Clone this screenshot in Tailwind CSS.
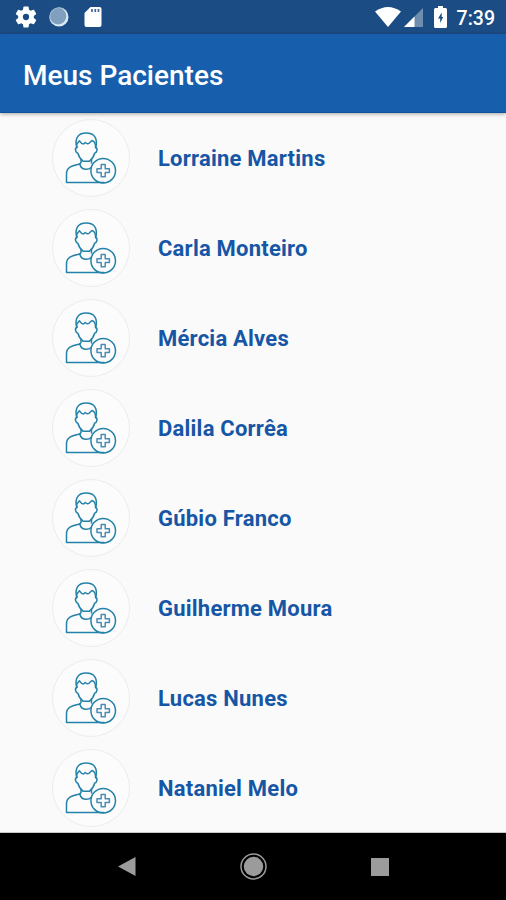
<!DOCTYPE html>
<html lang="pt-BR">
<head>
    <meta charset="UTF-8">
    <meta name="viewport" content="width=device-width, initial-scale=1.0">
    <title>Meus Pacientes</title>
    <script src="https://cdn.jsdelivr.net/npm/@tailwindcss/browser@4"></script>
</head>
<body class="h-[900px] flex flex-col overflow-hidden bg-[#fafafa] font-['Roboto',sans-serif]">

    <!-- Ícone de paciente -->
    <svg class="hidden">
        <symbol id="paciente" viewBox="0 0 78 78">
            <circle cx="39" cy="39" r="38.5" fill="#fcfcfc" stroke="#ececee" />
            <g fill="none" stroke="#2482a8" stroke-width="1.5" stroke-linecap="round" stroke-linejoin="round">
                <path d="M24.8 28.5C22.5 20 25.5 14 34.2 14S45.9 20 43.6 28.5" />
                <path d="M24.8 28.500V25L27.500 21.800Q29.500 25 31.500 25L33.200 23.500Q35 25.300 37 24.300L40 21.500Q43.600 22.500 43.600 28.500" />
                <path d="M24.8 28.5Q23 29 23.6 31.500Q24.100 34 25.900 34.200Q27.300 39.500 31.200 42.300H37.300Q41.200 39.500 42.600 34.200Q44.400 34 44.900 31.500Q45.400 29 43.600 28.500" />
                <path d="M29 40.500V43.500L27.800 45Q29 50.300 34.200 50.300Q37.500 50.300 39.200 48.500M39.500 40.500V44" />
                <path d="M27.800 45C21.500 46.500 14.500 47 14.500 55V63.500H52" />
                <circle cx="51.200" cy="51.700" r="12.300" />
                <path d="M49.200 45.600H53.200V49.800H57.400V53.600H53.200V57.800H49.200V53.600H45V49.800H49.200Z" stroke="#4a8db3" stroke-width="1.500" />
            </g>
        </symbol>
    </svg>

    <!-- Barra de status -->
    <div class="h-[34px] shrink-0 flex items-center justify-between bg-[#1b4d84] pl-[15px] pr-[11px] text-white">
        <div class="flex items-center gap-3">
            <svg class="w-[22px] h-[22px]" viewBox="1.5 1.5 21 21" fill="currentColor">
                <path d="M19.43 12.98c.04-.32.07-.64.07-.98s-.03-.66-.07-.98l2.11-1.65c.19-.15.24-.42.12-.64l-2-3.46c-.12-.22-.39-.3-.61-.22l-2.49 1c-.52-.4-1.08-.73-1.69-.98l-.38-2.65C14.46 2.18 14.25 2 14 2h-4c-.25 0-.46.18-.49.42l-.38 2.65c-.61.25-1.17.59-1.69.98l-2.49-1c-.23-.09-.49 0-.61.22l-2 3.46c-.13.22-.07.49.12.64l2.11 1.65c-.04.32-.07.65-.07.98s.03.66.07.98l-2.11 1.65c-.19.15-.24.42-.12.64l2 3.46c.12.22.39.3.61.22l2.49-1c.52.4 1.08.73 1.69.98l.38 2.65c.03.24.24.42.49.42h4c.25 0 .46-.18.49-.42l.38-2.65c.61-.25 1.17-.59 1.69-.98l2.49 1c.23.09.49 0 .61-.22l2-3.46c.12-.22.07-.49-.12-.64zM12 15a3 3 0 1 1 0-6 3 3 0 0 1 0 6z" />
            </svg>
            <svg class="w-5 h-5" viewBox="0 0 20 20">
                <circle cx="10" cy="10" r="9.5" fill="#dcebf7" />
                <circle cx="9.1" cy="9.1" r="8.3" fill="#819fbe" />
                <path d="M3.5 17A9.5 9.5 0 0 1 17 3.500" fill="none" stroke="#a7bdd2" stroke-width=".8" />
            </svg>
            <svg class="w-[18px] h-[22px] ml-[3px]" viewBox="0 0 18 22">
                <path d="M6.5 1H15.5Q17.5 1 17.5 3V19Q17.5 21 15.5 21H2.5Q.5 21 .5 19V7Z" fill="#fff" />
                <path d="M8 3V6M11.3 3V6M14.5 3V6" stroke="#3d6795" stroke-width="1.7" />
            </svg>
        </div>
        <div class="flex items-center">
            <svg class="w-[26px] h-5" viewBox="0 0 26 20">
                <path d="M0 4.5Q13-4.5 26 4.5L13 20Z" fill="#fff" />
            </svg>
            <svg class="w-[19px] h-[19px] ml-[3px]" viewBox="0 0 19 19">
                <path d="M19 0V19H0Z" fill="#6e8eaf" />
                <path d="M10.5 8.5V19H0Z" fill="#fff" />
            </svg>
            <svg class="w-[13px] h-[22px] ml-[11px]" viewBox="0 0 13 22">
                <path d="M4 0H9V2H11.5Q13 2 13 3.5V20.5Q13 22 11.5 22H1.5Q0 22 0 20.5V3.5Q0 2 1.5 2H4Z" fill="#fff" />
                <path d="M7.7 6.5L4 12.5H6.2V17L9.2 11H7.7Z" fill="#1b4d84" />
            </svg>
            <span class="ml-2.5 pt-[3px] text-[19.5px] leading-none font-medium">7:39</span>
        </div>
    </div>

    <!-- Cabeçalho -->
    <header class="relative h-[79px] shrink-0 flex items-center bg-[#175fac] pl-[23px] pt-1.5 border-b border-[#0e529b] shadow-[0_1px_4px_rgba(0,0,0,0.35)]">
        <h1 class="text-[28px] leading-none font-medium text-white">Meus Pacientes</h1>
    </header>

    <!-- Lista de pacientes -->
    <ul id="listaPacientes" class="flex-1 min-h-0 overflow-hidden border-b border-[#c8c8c8]"></ul>

    <!-- Barra de navegação -->
    <nav class="h-[67px] shrink-0 flex items-center justify-between bg-black pl-[118px] pr-[117px]">
        <svg class="w-[18px] h-[19px]" viewBox="0 0 18 19"><path d="M0 9.5L17.5 0V19Z" fill="#9b9b9b" /></svg>
        <svg class="w-[27px] h-[27px]" viewBox="0 0 27 27">
            <circle cx="13.5" cy="13.5" r="12.5" fill="none" stroke="#9b9b9b" stroke-width="1.5" />
            <circle cx="13.5" cy="13.5" r="9.7" fill="#9b9b9b" />
        </svg>
        <div class="w-[18px] h-[18px] bg-[#9b9b9b]"></div>
    </nav>

    <script>
        const pacientes = [
            'Lorraine Martins',
            'Carla Monteiro',
            'Mércia Alves',
            'Dalila Corrêa',
            'Gúbio Franco',
            'Guilherme Moura',
            'Lucas Nunes',
            'Nataniel Melo'
        ];

        // Renderizar a lista
        const lista = document.getElementById('listaPacientes');
        pacientes.forEach(nome => {
            const item = document.createElement('li');
            item.className = 'h-[90px] flex items-center gap-[28.5px] pl-[51.5px]';
            item.innerHTML = `
                <svg class="w-[78px] h-[78px] shrink-0"><use href="#paciente" /></svg>
                <span class="text-[22px] leading-none font-bold tracking-[0.22px] text-[#1656a5] pt-0.5">${nome}</span>
            `;
            lista.appendChild(item);
        });
    </script>
</body>
</html>
